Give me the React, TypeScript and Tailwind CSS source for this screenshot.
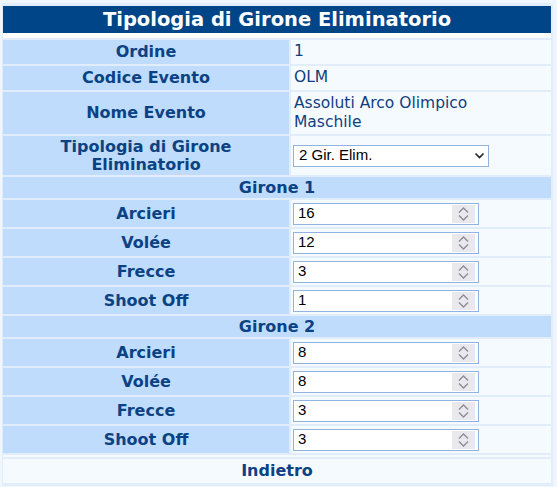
const font = { fontFamily: '"DejaVu Sans", Verdana, sans-serif' };

type Row = { label: string; value: string };

const girone1: Row[] = [
  { label: "Arcieri", value: "16" },
  { label: "Volée", value: "12" },
  { label: "Frecce", value: "3" },
  { label: "Shoot Off", value: "1" },
];

const girone2: Row[] = [
  { label: "Arcieri", value: "8" },
  { label: "Volée", value: "8" },
  { label: "Frecce", value: "3" },
  { label: "Shoot Off", value: "3" },
];

function NumberField({ value }: { value: string }) {
  return (
    <div className="flex h-[22px] w-[186px] items-stretch border border-[#91b3e2] bg-white py-px pr-[3px]">
      <input
        readOnly
        value={value}
        className="min-w-0 flex-1 bg-transparent pl-[4px] text-[15px] text-black outline-none"
        style={{ fontFamily: '"Liberation Sans", Arial, sans-serif' }}
      />
      <div className="flex w-[23px] flex-col items-center justify-center gap-[2px] bg-[#e9e9ed]">
        <svg width="11" height="6" viewBox="0 0 11 6" fill="none" stroke="#8c8c95" strokeWidth="1.4">
          <path d="M1 5.5 L5.5 1 L10 5.5" />
        </svg>
        <svg width="11" height="6" viewBox="0 0 11 6" fill="none" stroke="#8c8c95" strokeWidth="1.4">
          <path d="M1 0.5 L5.5 5 L10 0.5" />
        </svg>
      </div>
    </div>
  );
}

function Section({ title, rows }: { title: string; rows: Row[] }) {
  return (
    <>
      <div className="col-span-2 flex h-[21px] items-center justify-center bg-[#bfdcfc] text-[16px] font-bold text-[#0b4284]">
        {title}
      </div>
      {rows.map((r) => (
        <div key={title + r.label} className="contents">
          <div className="flex h-[27px] items-center justify-center bg-[#bfdcfc] text-[16px] font-bold text-[#0b4284]">
            {r.label}
          </div>
          <div className="flex items-center bg-[#f5faff] pl-[2px]">
            <NumberField value={r.value} />
          </div>
        </div>
      ))}
    </>
  );
}

export default function App() {
  return (
    <div className="min-h-screen bg-[#eff6fe] pt-[3px] pl-[2px]" style={font}>
      <div className="w-[551px] bg-[#e1edfb] pt-[3px] pr-[2px] pb-[3px] pl-[1px]">
        <div className="h-[32px] border-b-[5px] border-white bg-[#004587] text-center text-[19.5px] leading-[27px] font-bold text-white">
          Tipologia di Girone Eliminatorio
        </div>

        <div className="mt-[2px] grid grid-cols-[286px_260px] gap-[2px]">
          <div className="flex h-[24px] items-center justify-center bg-[#bfdcfc] text-[16px] font-bold text-[#0b4284]">
            Ordine
          </div>
          <div className="flex items-center bg-[#f5faff] pl-[3px] text-[15.5px] text-[#0f3f80]">1</div>

          <div className="flex h-[24px] items-center justify-center bg-[#bfdcfc] text-[16px] font-bold text-[#0b4284]">
            Codice Evento
          </div>
          <div className="flex items-center bg-[#f5faff] pl-[3px] text-[15.5px] text-[#0f3f80]">OLM</div>

          <div className="flex h-[42px] items-center justify-center bg-[#bfdcfc] text-[16px] font-bold text-[#0b4284]">
            Nome Evento
          </div>
          <div className="flex items-center bg-[#f5faff] pl-[3px] text-[15.5px] leading-[19px] text-[#0f3f80]">
            Assoluti Arco Olimpico
            <br />
            Maschile
          </div>

          <div className="flex h-[39px] items-center justify-center bg-[#bfdcfc] text-center text-[16px] leading-[18px] font-bold text-[#0b4284]">
            Tipologia di Girone
            <br />
            Eliminatorio
          </div>
          <div className="flex items-center bg-[#f5faff] pl-[2px]">
            <div
              className="flex h-[22px] w-[196px] items-center justify-between border border-[#91b3e2] bg-white pr-[3px] pl-[5px] text-[15px] text-black"
              style={{ fontFamily: '"Liberation Sans", Arial, sans-serif' }}
            >
              <span>2 Gir. Elim.</span>
              <svg width="11" height="7" viewBox="0 0 11 7" fill="none" stroke="#222" strokeWidth="1.6">
                <path d="M1.5 1.5 L5.5 5.5 L9.5 1.5" />
              </svg>
            </div>
          </div>

          <Section title="Girone 1" rows={girone1} />
          <Section title="Girone 2" rows={girone2} />

          <div className="col-span-2 h-[2px] bg-[#f5faff]" />
          <div className="col-span-2 flex h-[24px] items-center justify-center bg-[#f5faff] text-[16px] font-bold text-[#0b4284]">
            Indietro
          </div>
        </div>
      </div>
    </div>
  );
}
